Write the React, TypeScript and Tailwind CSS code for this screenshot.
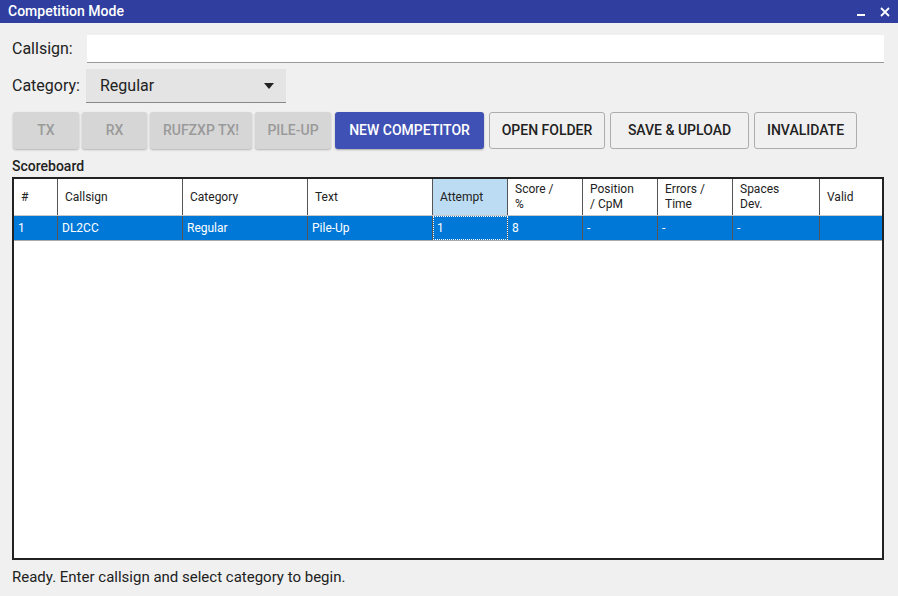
import React from 'react';

const cols = [
  { w: 'w-[44px]', h: '#', v: '1' },
  { w: 'w-[125px]', h: 'Callsign', v: 'DL2CC' },
  { w: 'w-[125px]', h: 'Category', v: 'Regular' },
  { w: 'w-[125px]', h: 'Text', v: 'Pile-Up' },
  { w: 'w-[75px]', h: 'Attempt', v: '1' },
  { w: 'w-[75px]', h: 'Score /\n%', v: '8' },
  { w: 'w-[75px]', h: 'Position\n/ CpM', v: '-' },
  { w: 'w-[75px]', h: 'Errors /\nTime', v: '-' },
  { w: 'w-[87px]', h: 'Spaces\nDev.', v: '-' },
  { w: 'flex-1', h: 'Valid', v: '' },
];

const disabled = [
  { label: 'TX', w: 'w-[66px]' },
  { label: 'RX', w: 'w-[65px]' },
  { label: 'RUFZXP TX!', w: 'w-[102px]' },
  { label: 'PILE-UP', w: 'w-[76px]' },
];

const outlined = [
  { label: 'OPEN FOLDER', w: 'w-[116px]' },
  { label: 'SAVE & UPLOAD', w: 'w-[139px]' },
  { label: 'INVALIDATE', w: 'w-[103px]' },
];

export default function App() {
  return (
    <div className="w-[898px] h-[596px] bg-[#f0f0f0] flex flex-col text-[#222]" style={{ fontFamily: 'Roboto, "Noto Sans", sans-serif' }}>
      <div className="h-[23px] bg-[#303f9f] text-white flex items-center justify-between pl-[8px] pr-[8px]">
        <span className="text-[14px] font-medium">Competition Mode</span>
        <div className="flex items-center gap-[14px]">
          <svg width="10" height="10" viewBox="0 0 10 10"><rect x="1" y="7" width="8" height="2" fill="white" /></svg>
          <svg width="10" height="10" viewBox="0 0 10 10"><path d="M1 1L9 9M9 1L1 9" stroke="white" strokeWidth="1.8" /></svg>
        </div>
      </div>

      <div className="flex items-center mt-[12px] pl-[12px] pr-[14px] h-[28px]">
        <span className="text-[16px] w-[75px]">Callsign:</span>
        <div className="flex-1 h-[28px] bg-white border-b border-[#999]" />
      </div>

      <div className="flex items-center mt-[6px] pl-[12px] h-[34px]">
        <span className="text-[16px] w-[74px]">Category:</span>
        <div className="w-[200px] h-[34px] bg-[#e4e4e4] border-b border-[#888] flex items-center justify-between pl-[14px] pr-[12px]">
          <span className="text-[16px]">Regular</span>
          <svg width="10" height="6" viewBox="0 0 10 6"><path d="M0 0H10L5 6Z" fill="#222" /></svg>
        </div>
      </div>

      <div className="flex items-center mt-[9px] pl-[13px] gap-[3px] h-[37px]">
        {disabled.map((b) => (
          <div key={b.label} className={`${b.w} h-[37px] rounded-[3px] bg-[#d6d6d6] shadow-[0_1px_2px_rgba(0,0,0,0.25)] flex items-center justify-center text-[14px] font-medium text-[#9a9a9a]`}>
            {b.label}
          </div>
        ))}
        <div className="w-[149px] h-[37px] ml-[1px] rounded-[3px] bg-[#3f51b5] shadow-[0_1px_2px_rgba(0,0,0,0.3)] flex items-center justify-center text-[14px] font-medium text-white">
          NEW COMPETITOR
        </div>
        {outlined.map((b) => (
          <div key={b.label} className={`${b.w} h-[37px] ml-[2px] rounded-[3px] bg-[#f0f0f0] border border-[#adadad] flex items-center justify-center text-[14px] font-medium text-[#222]`}>
            {b.label}
          </div>
        ))}
      </div>

      <div className="pl-[12px] mt-[7px] text-[14px] font-medium h-[19px]">Scoreboard</div>

      <div className="mx-[12px] mt-[2px] w-[872px] h-[383px] bg-white border-2 border-[#222] flex flex-col text-[12px]">
        <div className="flex h-[37px] border-b border-[#c8c8c8]">
          {cols.map((c, i) => (
            <div key={i} className={`${c.w} ${i === 4 ? 'bg-[#bcdcf4]' : ''} ${i < cols.length - 1 ? 'border-r border-[#555]' : ''} flex items-center pl-[7px] leading-[15px] whitespace-pre`}>
              {c.h}
            </div>
          ))}
        </div>
        <div className="flex h-[24px] bg-[#0078d7] text-white">
          {cols.map((c, i) => (
            <div key={i} className={`${c.w} ${i < cols.length - 1 ? 'border-r border-[#555]' : ''} ${i === 4 ? 'outline-1 outline-dotted outline-white -outline-offset-1' : ''} flex items-center pl-[4px]`}>
              {c.v}
            </div>
          ))}
        </div>
        <div className="border-t border-[#aaa] flex-1" />
      </div>

      <div className="pl-[12px] mt-[6px] text-[15px]">Ready. Enter callsign and select category to begin.</div>
    </div>
  );
}
